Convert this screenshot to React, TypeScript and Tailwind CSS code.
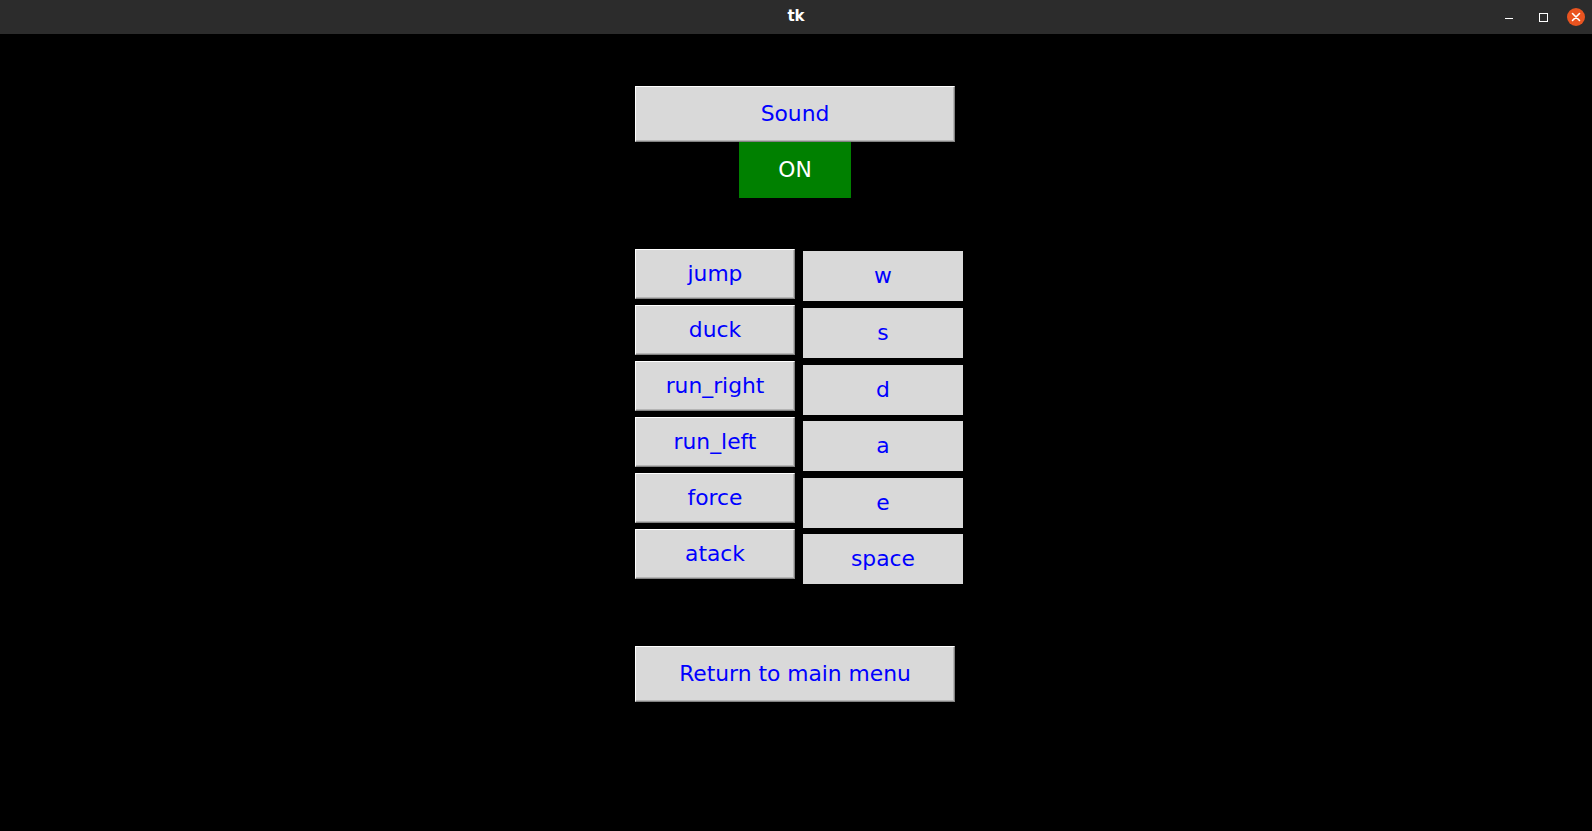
import React from 'react';

const actions = ['jump', 'duck', 'run_right', 'run_left', 'force', 'atack'];
const keys = [
  { key: 'w', gap: 'mt-0' },
  { key: 's', gap: 'mt-[7px]' },
  { key: 'd', gap: 'mt-[7px]' },
  { key: 'a', gap: 'mt-[6px]' },
  { key: 'e', gap: 'mt-[7px]' },
  { key: 'space', gap: 'mt-[6px]' },
];

const raised =
  'bg-[#d9d9d9] text-[#0000ff] border border-t-white border-l-white border-r-[#828282] border-b-[#828282] shadow-[inset_-1px_-1px_0_#b5b5b5] flex items-center justify-center';

const TitleBar = () => (
  <div className="h-[34px] bg-[#2c2c2c] grid grid-cols-[1fr_auto_1fr] items-center">
    <div />
    <div className="text-white font-bold text-[15px] pb-[2px]">tk</div>
    <div className="flex justify-end items-center">
      <div className="w-[34px] h-[34px] flex items-center justify-center">
        <div className="w-[8px] h-[1px] bg-white mt-[3px]" />
      </div>
      <div className="w-[34px] h-[34px] flex items-center justify-center">
        <div className="w-[9px] h-[9px] border border-white" />
      </div>
      <div className="w-[32px] h-[34px] flex items-center justify-center">
        <div className="w-[18px] h-[18px] rounded-full bg-[#e95420] flex items-center justify-center">
          <svg width="10" height="10" viewBox="0 0 10 10">
            <path d="M1.5 1.5 L8.5 8.5 M8.5 1.5 L1.5 8.5" stroke="white" strokeWidth="1.6" strokeLinecap="round" />
          </svg>
        </div>
      </div>
    </div>
  </div>
);

export default function App() {
  return (
    <div className="min-h-screen h-[831px] bg-black flex flex-col font-['DejaVu_Sans',sans-serif] overflow-hidden">
      <TitleBar />
      <main className="flex flex-col items-center pt-[52px]">
        <div className="w-[322px] flex flex-col text-[21.8px]">
          <button className={`${raised} w-[320px] h-[56px]`}>Sound</button>
          <div className="w-[320px] flex justify-center">
            <div className="w-[112px] h-[56px] bg-[#008000] text-white flex items-center justify-center">ON</div>
          </div>

          <div className="flex gap-[8px] mt-[51px]">
            <div className="flex flex-col gap-[6px]">
              {actions.map((a) => (
                <button key={a} className={`${raised} w-[160px] h-[50px]`}>
                  {a}
                </button>
              ))}
            </div>
            <div className="flex flex-col mt-[2px]">
              {keys.map((k) => (
                <div
                  key={k.key}
                  className={`${k.gap} w-[160px] h-[50px] bg-[#d9d9d9] text-[#0000ff] flex items-center justify-center`}
                >
                  {k.key}
                </div>
              ))}
            </div>
          </div>

          <button className={`${raised} w-[320px] h-[56px] mt-[62px]`}>Return to main menu</button>
        </div>
      </main>
    </div>
  );
}
